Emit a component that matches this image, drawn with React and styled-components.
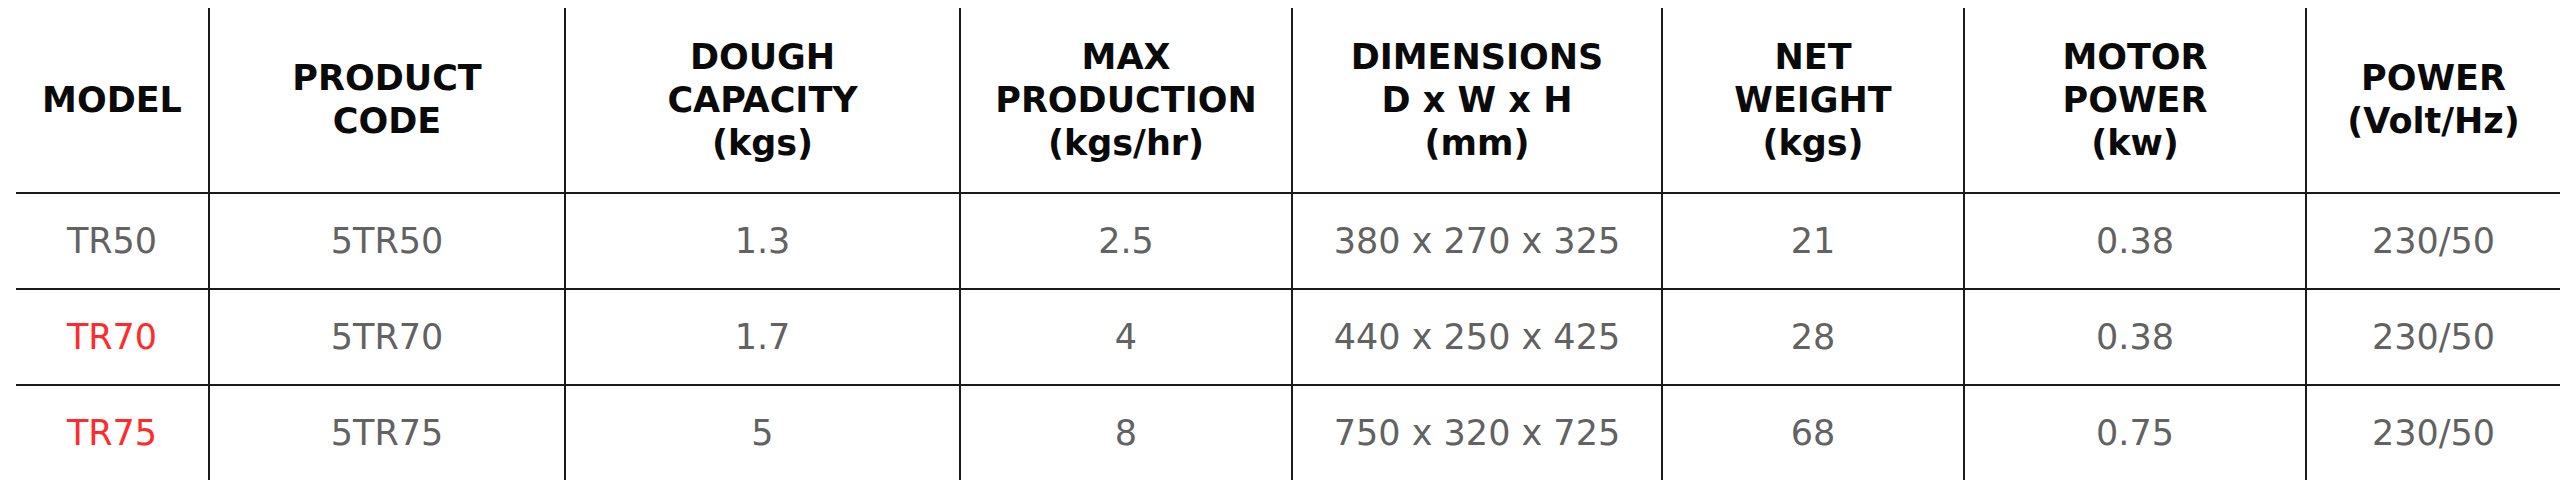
import React from 'react';
import styled, { createGlobalStyle } from 'styled-components';

const GlobalStyle = createGlobalStyle`
    html, body {
        margin: 0;
        padding: 0;
        background: #fff;
    }
    body {
        font-family: "DejaVu Sans", Verdana, sans-serif;
    }
`;

const columns = [
    { key: 'model', width: 193, label: ['MODEL'] },
    { key: 'code', width: 356, label: ['PRODUCT', 'CODE'] },
    { key: 'capacity', width: 395, label: ['DOUGH', 'CAPACITY', '(kgs)'] },
    { key: 'production', width: 332, label: ['MAX', 'PRODUCTION', '(kgs/hr)'] },
    { key: 'dimensions', width: 370, label: ['DIMENSIONS', 'D x W x H', '(mm)'] },
    { key: 'weight', width: 302, label: ['NET', 'WEIGHT', '(kgs)'] },
    { key: 'motor', width: 342, label: ['MOTOR', 'POWER', '(kw)'] },
    { key: 'power', width: 254, label: ['POWER', '(Volt/Hz)'] },
];

const rows = [
    { model: 'TR50', code: '5TR50', capacity: '1.3', production: '2.5', dimensions: '380 x 270 x 325', weight: '21', motor: '0.38', power: '230/50', linked: false },
    { model: 'TR70', code: '5TR70', capacity: '1.7', production: '4', dimensions: '440 x 250 x 425', weight: '28', motor: '0.38', power: '230/50', linked: true },
    { model: 'TR75', code: '5TR75', capacity: '5', production: '8', dimensions: '750 x 320 x 725', weight: '68', motor: '0.75', power: '230/50', linked: true },
];

const Page = styled.div`
    padding: 8px 0 0 16px;
`;

const SpecTable = styled.table`
    border-collapse: collapse;
    table-layout: fixed;
    width: 2544px;
`;

const HeadCell = styled.th`
    height: 184px;
    padding: 0;
    text-align: center;
    vertical-align: middle;
    font-family: "DejaVu Sans", Verdana, sans-serif;
    font-weight: bold;
    font-size: 35px;
    line-height: 43px;
    color: #0a0a0a;
    border-left: ${(p) => (p.$first ? 'none' : '2px solid #1a1a1a')};
`;

const Row = styled.tr`
    border-top: 2px solid #1a1a1a;
`;

const Cell = styled.td`
    height: 94px;
    padding: 0;
    text-align: center;
    vertical-align: middle;
    font-family: "DejaVu Sans", Verdana, sans-serif;
    font-size: 35px;
    color: ${(p) => (p.$red ? '#ff2b2b' : '#626262')};
    border-left: ${(p) => (p.$first ? 'none' : '2px solid #1a1a1a')};
`;

export default function App() {
    return (
        <Page>
            <GlobalStyle />
            <SpecTable>
                <colgroup>
                    {columns.map((c) => (
                        <col key={c.key} style={{ width: c.width }} />
                    ))}
                </colgroup>
                <thead>
                    <tr>
                        {columns.map((c, i) => (
                            <HeadCell key={c.key} $first={i === 0}>
                                {c.label.map((line, j) => (
                                    <React.Fragment key={j}>
                                        {j > 0 && <br />}
                                        {line}
                                    </React.Fragment>
                                ))}
                            </HeadCell>
                        ))}
                    </tr>
                </thead>
                <tbody>
                    {rows.map((r) => (
                        <Row key={r.code}>
                            {columns.map((c, i) => (
                                <Cell key={c.key} $first={i === 0} $red={i === 0 && r.linked}>
                                    {r[c.key]}
                                </Cell>
                            ))}
                        </Row>
                    ))}
                </tbody>
            </SpecTable>
        </Page>
    );
}
